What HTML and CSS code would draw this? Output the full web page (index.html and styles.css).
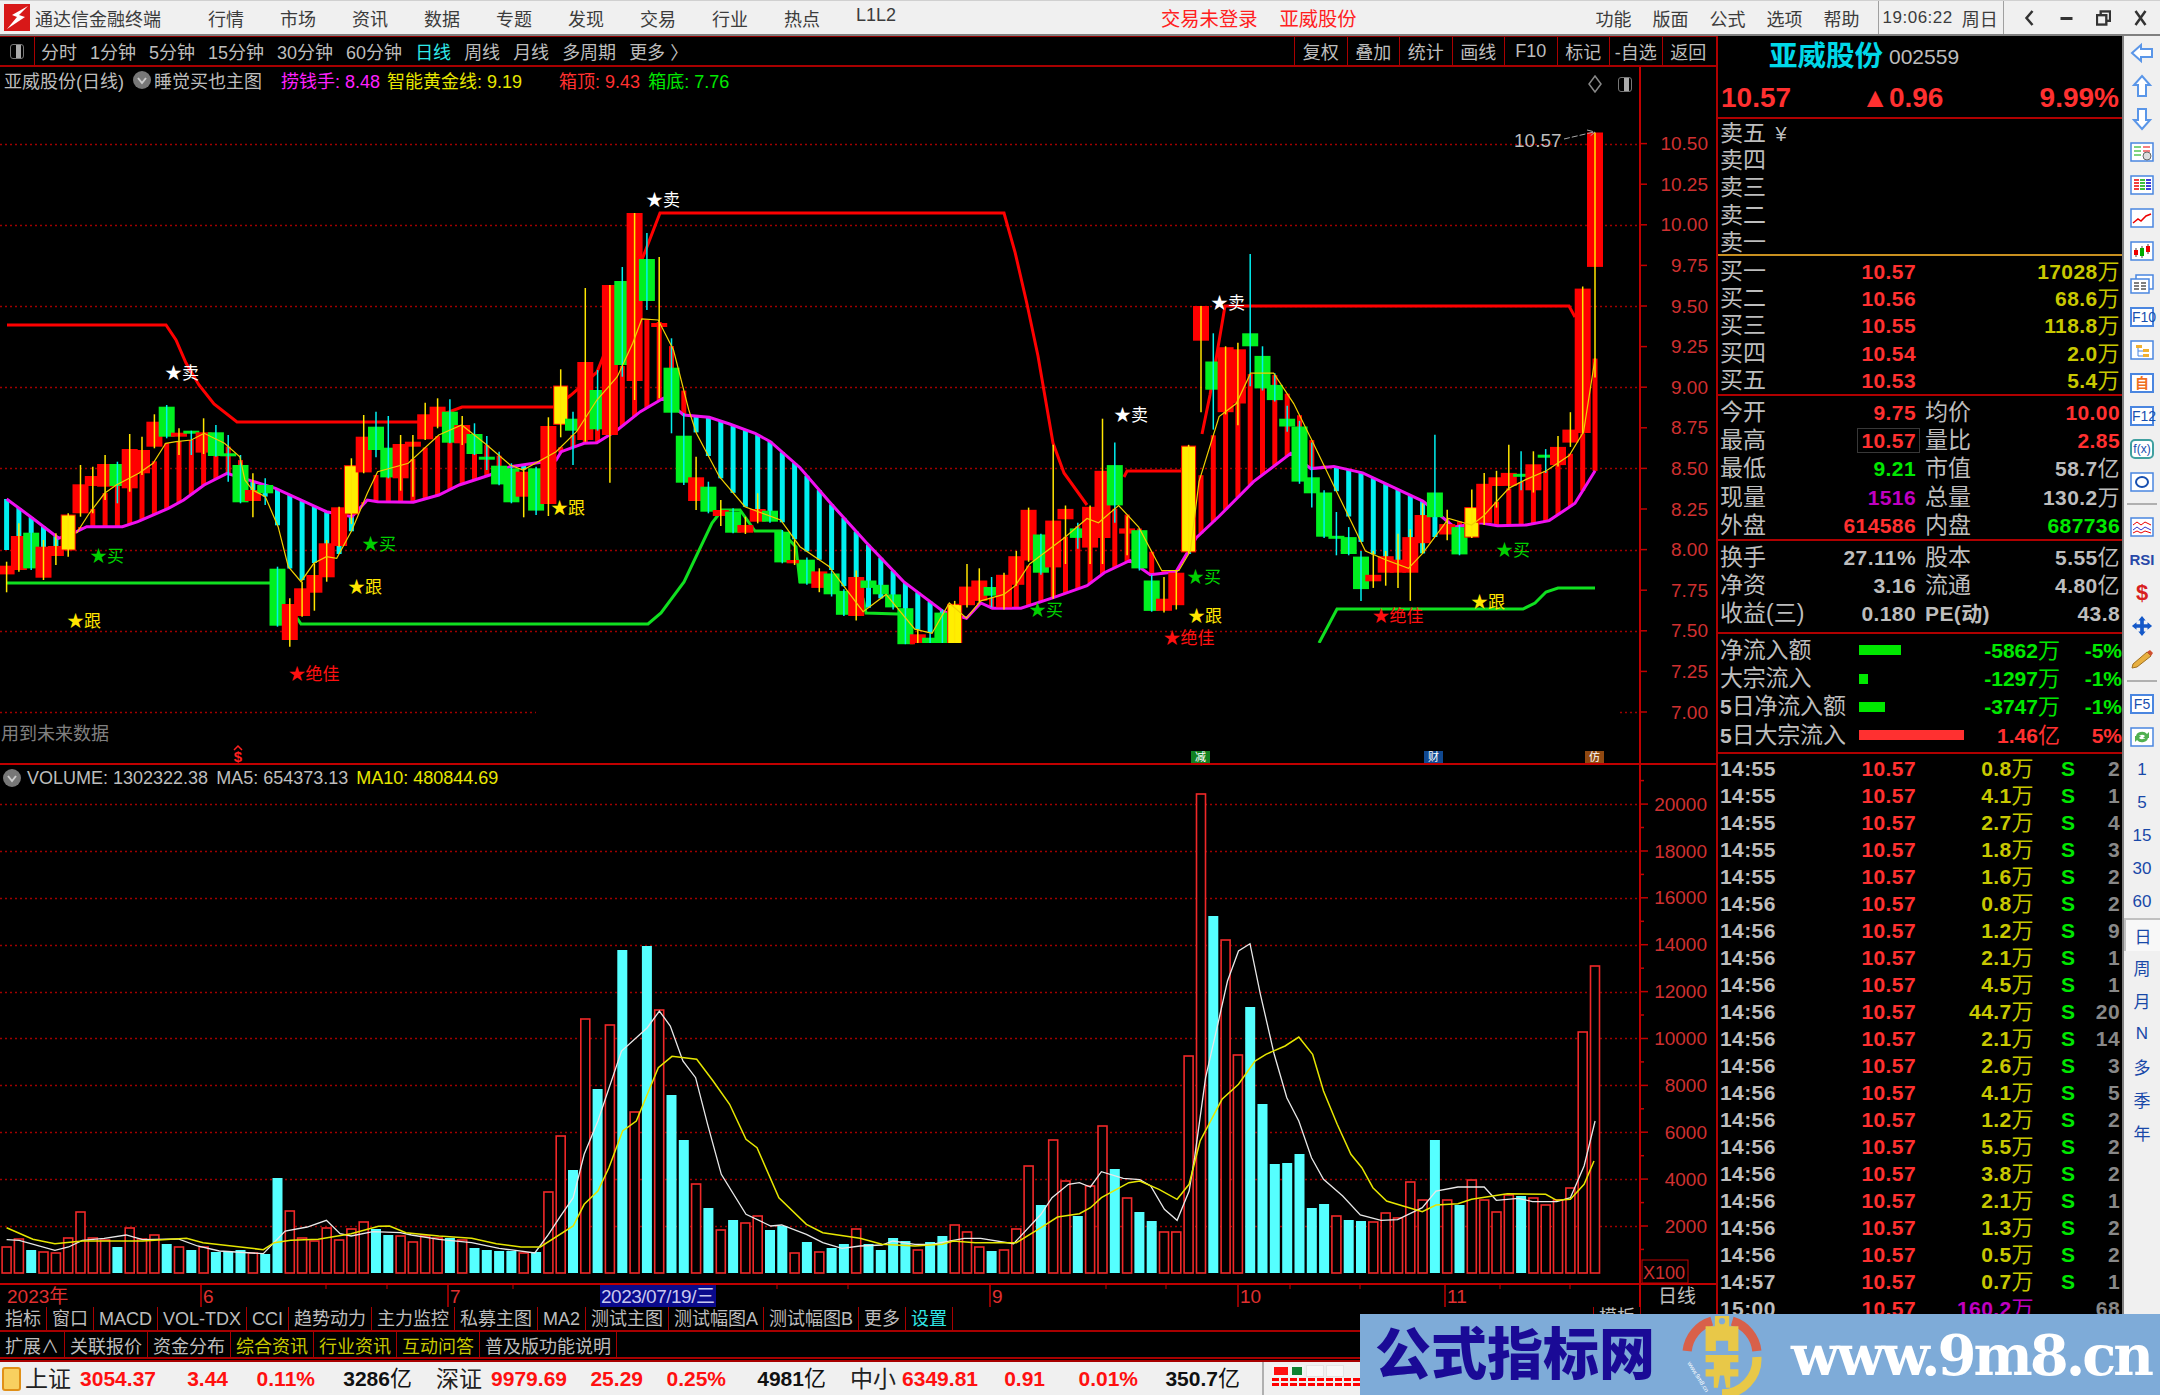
FILE: index.html
```html
<!DOCTYPE html>
<html lang="zh">
<head>
    <meta charset="UTF-8">
    <meta name="viewport" content="width=device-width, initial-scale=1.0">
    <title>通达信金融终端</title>
    <link rel="stylesheet" href="styles.css">
</head>
<body>
    <!-- Title Bar -->
    <div class="title-bar">
        <svg class="app-logo" viewBox="0 0 26 27"><rect width="26" height="27" fill="#d81818"/><path d="M24 2 L8 11 L13 13 L3 25 L21 13 L15 11 Z" fill="#fff"/></svg>
        <span class="app-name">通达信金融终端</span>
        <div class="menu">
            <span>行情</span><span>市场</span><span>资讯</span><span>数据</span><span>专题</span>
            <span>发现</span><span>交易</span><span>行业</span><span>热点</span><span>L1L2</span>
        </div>
        <div class="login-info"><span>交易未登录</span><span>亚威股份</span></div>
        <div class="menu menu-right">
            <span>功能</span><span>版面</span><span>公式</span><span>选项</span><span>帮助</span>
        </div>
        <div class="clock"><span class="clock-time">19:06:22</span><span>周日</span></div>
        <div class="win-buttons">
            <svg viewBox="0 0 14 18"><path d="M10 2 L4 9 L10 16" fill="none" stroke="#333" stroke-width="2.5"/></svg>
            <svg viewBox="0 0 14 18"><rect x="1" y="8" width="12" height="3" fill="#333"/></svg>
            <svg viewBox="0 0 16 18"><rect x="5" y="2" width="10" height="10" fill="none" stroke="#333" stroke-width="2.5"/><rect x="1" y="6" width="10" height="10" fill="#f0f0f0" stroke="#333" stroke-width="2.5"/></svg>
            <svg viewBox="0 0 14 18"><path d="M2 2 L12 16 M12 2 L2 16" stroke="#333" stroke-width="2.5"/></svg>
        </div>
    </div>

    <div class="main">
        <!-- Chart Column -->
        <div class="chart-column">
            <div class="toolbar">
                <div class="toolbar-icon"><span class="toggle-icon"></span></div>
                <div class="periods">
                    <span>分时</span><span>1分钟</span><span>5分钟</span><span>15分钟</span><span>30分钟</span><span>60分钟</span>
                    <span class="period-active">日线</span><span>周线</span><span>月线</span><span>多周期</span><span>更多 〉</span>
                </div>
                <div class="tools">
                    <span>复权</span><span>叠加</span><span>统计</span><span>画线</span><span>F10</span><span>标记</span><span>-自选</span><span>返回</span>
                </div>
            </div>

            <div class="pane pane-price">
                <svg id="price-chart" class="chart" viewBox="0 67 1716 698"></svg>
                <div class="pane-head">
                    <span>亚威股份(日线)</span>
                    <svg class="head-dot" viewBox="0 0 18 18"><circle cx="9" cy="9" r="9" fill="#777"/><path d="M5 7 L9 12 L13 7" fill="none" stroke="#ccc" stroke-width="2"/></svg>
                    <span class="head-name">睡觉买也主图</span>
                    <span class="c-magenta head-a">捞钱手: 8.48</span>
                    <span class="c-yellow head-b">智能黄金线: 9.19</span>
                    <span class="c-red head-c">箱顶: 9.43</span>
                    <span class="c-green head-d">箱底: 7.76</span>
                </div>
                <div class="pane-corner">
                    <svg class="corner-diamond" viewBox="0 0 14 18"><path d="M7 1 L13 9 L7 17 L1 9 Z" fill="none" stroke="#888" stroke-width="1.5"/></svg>
                    <span class="toggle-icon"></span>
                </div>
            </div>

            <div class="pane pane-volume">
                <svg id="volume-chart" class="chart" viewBox="0 764 1716 518"></svg>
                <div class="pane-head pane-head-volume">
                    <svg class="head-dot" viewBox="0 0 18 18"><circle cx="9" cy="9" r="9" fill="#777"/><path d="M5 7 L9 12 L13 7" fill="none" stroke="#ccc" stroke-width="2"/></svg>
                    <span>VOLUME: 1302322.38</span>
                    <span>MA5: 654373.13</span>
                    <span class="c-yellow">MA10: 480844.69</span>
                </div>
            </div>

            <svg id="date-axis" class="chart date-axis" viewBox="0 1282 1716 24"></svg>

            <div class="tabs">
                <span>指标</span><span>窗口</span><span>MACD</span><span>VOL-TDX</span><span>CCI</span><span>趋势动力</span><span>主力监控</span><span>私募主图</span><span>MA2</span><span>测试主图</span><span>测试幅图A</span><span>测试幅图B</span><span>更多</span><span class="c-cyan">设置</span>
                <span class="tab-end">模板</span>
            </div>
            <div class="tabs tabs-last">
                <span>扩展∧</span><span>关联报价</span><span>资金分布</span><span class="c-olive">综合资讯</span><span class="c-olive">行业资讯</span><span class="c-olive">互动问答</span><span>普及版功能说明</span>
            </div>
        </div>

        <!-- Quote Panel -->
        <div class="quote-panel">
            <div class="quote-head">
                <div class="stock-name"><b>亚威股份</b><span>002559</span></div>
                <div class="stock-price"><span>10.57</span><span class="stock-change">▲0.96</span><span>9.99%</span></div>
            </div>
            <div class="q-block q-sell">
                <div class="q-row"><span class="q-label">卖五 <i class="yuan">¥</i></span></div>
                <div class="q-row"><span class="q-label">卖四</span></div>
                <div class="q-row"><span class="q-label">卖三</span></div>
                <div class="q-row"><span class="q-label">卖二</span></div>
                <div class="q-row"><span class="q-label">卖一</span></div>
            </div>
            <div class="q-block q-buy">
                <div class="q-row"><div class="q-cell"><span class="q-label">买一</span><span class="c-red">10.57</span></div><div class="q-cell q-end c-olive">17028<i>万</i></div></div>
                <div class="q-row"><div class="q-cell"><span class="q-label">买二</span><span class="c-red">10.56</span></div><div class="q-cell q-end c-olive">68.6<i>万</i></div></div>
                <div class="q-row"><div class="q-cell"><span class="q-label">买三</span><span class="c-red">10.55</span></div><div class="q-cell q-end c-olive">118.8<i>万</i></div></div>
                <div class="q-row"><div class="q-cell"><span class="q-label">买四</span><span class="c-red">10.54</span></div><div class="q-cell q-end c-olive">2.0<i>万</i></div></div>
                <div class="q-row"><div class="q-cell"><span class="q-label">买五</span><span class="c-red">10.53</span></div><div class="q-cell q-end c-olive">5.4<i>万</i></div></div>
            </div>
            <div class="q-block q-stats q-stats-main">
                <div class="q-row"><div class="q-cell"><span class="q-label">今开</span><span class="c-red">9.75</span></div><div class="q-cell"><span class="q-label">均价</span><span class="c-red">10.00</span></div></div>
                <div class="q-row"><div class="q-cell"><span class="q-label">最高</span><span class="c-red q-boxed">10.57</span></div><div class="q-cell"><span class="q-label">量比</span><span class="c-red">2.85</span></div></div>
                <div class="q-row"><div class="q-cell"><span class="q-label">最低</span><span class="c-green">9.21</span></div><div class="q-cell"><span class="q-label">市值</span><span>58.7<i>亿</i></span></div></div>
                <div class="q-row"><div class="q-cell"><span class="q-label">现量</span><span class="c-purple">1516</span></div><div class="q-cell"><span class="q-label">总量</span><span>130.2<i>万</i></span></div></div>
                <div class="q-row"><div class="q-cell"><span class="q-label">外盘</span><span class="c-red">614586</span></div><div class="q-cell"><span class="q-label">内盘</span><span class="c-green">687736</span></div></div>
            </div>
            <div class="q-block q-stats q-stats-fund">
                <div class="q-row"><div class="q-cell"><span class="q-label">换手</span><span>27.11%</span></div><div class="q-cell"><span class="q-label">股本</span><span>5.55<i>亿</i></span></div></div>
                <div class="q-row"><div class="q-cell"><span class="q-label">净资</span><span>3.16</span></div><div class="q-cell"><span class="q-label">流通</span><span>4.80<i>亿</i></span></div></div>
                <div class="q-row"><div class="q-cell"><span class="q-label">收益(三)</span><span>0.180</span></div><div class="q-cell"><span class="pe-label">PE(动)</span><span>43.8</span></div></div>
            </div>
            <div class="q-block q-flow">
                <div class="flow-row c-green"><span class="q-label">净流入额</span><span class="flow-bar bg-green" style="width:42px"></span><span class="flow-val">-5862<i>万</i></span><span class="flow-pct">-5%</span></div>
                <div class="flow-row c-green"><span class="q-label">大宗流入</span><span class="flow-bar bg-green" style="width:9px"></span><span class="flow-val">-1297<i>万</i></span><span class="flow-pct">-1%</span></div>
                <div class="flow-row c-green"><span class="q-label"><b>5</b>日净流入额</span><span class="flow-bar bg-green" style="width:26px"></span><span class="flow-val">-3747<i>万</i></span><span class="flow-pct">-1%</span></div>
                <div class="flow-row c-red"><span class="q-label"><b>5</b>日大宗流入</span><span class="flow-bar bg-red" style="width:105px"></span><span class="flow-val">1.46<i>亿</i></span><span class="flow-pct">5%</span></div>
            </div>
            <div id="ticks" class="ticks"></div>
        </div>

        <!-- Side Buttons -->
        <div class="side-bar">
            <div class="side-slot"><svg class="arrow-icon" viewBox="0 0 24 20"><path d="M2 10 L11 2 V6 H22 V14 H11 V18 Z"/></svg></div>
            <div class="side-slot"><svg class="arrow-icon" viewBox="0 0 20 24"><path d="M10 2 L18 11 H14 V22 H6 V11 H2 Z"/></svg></div>
            <div class="side-slot"><svg class="arrow-icon" viewBox="0 0 20 24"><path d="M10 22 L18 13 H14 V2 H6 V13 H2 Z"/></svg></div>
            <div class="side-slot"><svg class="tool-icon" viewBox="0 0 24 20"><rect class="frame" x="1" y="1" width="22" height="18"/><path d="M4 5h7M4 9h7M4 13h7" stroke="#0a0"/><path d="M13 5h7M13 9h7" stroke="#e00"/><circle cx="17" cy="14" r="4" fill="#ddd" stroke="#666"/></svg></div>
            <div class="side-slot"><svg class="tool-icon" viewBox="0 0 24 20"><rect class="frame" x="1" y="1" width="22" height="18"/><path d="M4 5h5M4 8h5M4 11h5M4 14h5" stroke="#e00" stroke-width="1.5"/><path d="M10 5h5M10 8h5M10 11h5M10 14h5" stroke="#0a0" stroke-width="1.5"/><path d="M16 5h5M16 8h5M16 11h5M16 14h5" stroke="#00c" stroke-width="1.5"/></svg></div>
            <div class="side-slot"><svg class="tool-icon" viewBox="0 0 24 20"><rect class="frame" x="1" y="1" width="22" height="18"/><path d="M3 15 L8 11 L11 13 L16 8 L21 6" fill="none" stroke="#e00" stroke-width="1.5"/></svg></div>
            <div class="side-slot"><svg class="tool-icon" viewBox="0 0 24 20"><rect class="frame" x="1" y="1" width="22" height="18"/><path d="M6 7v9M12 5v12M18 3v10" stroke="#444"/><rect x="4" y="9" width="4" height="5" fill="#e00"/><rect x="10" y="7" width="4" height="8" fill="#0a0"/><rect x="16" y="5" width="4" height="6" fill="#e00"/></svg></div>
            <div class="side-slot"><svg class="tool-icon" viewBox="0 0 24 20"><rect x="6" y="1" width="17" height="14" fill="#fff" stroke="#4a86e0" stroke-width="1.5"/><rect class="frame" x="1" y="5" width="18" height="14"/><path d="M4 9h5M4 12h5M4 15h5M11 9h5M11 12h5M11 15h5" stroke="#555" stroke-width="1.5"/></svg></div>
            <div class="side-slot"><span class="text-icon">F10</span></div>
            <div class="side-slot"><svg class="tool-icon" viewBox="0 0 24 20"><rect class="frame" x="1" y="1" width="22" height="18"/><path d="M6 5h6v3h-6zM13 9h6v3h-6zM13 14h6v3h-6z" fill="#f0b030"/><path d="M8 8v8h5M8 11h5" fill="none" stroke="#4a86e0"/></svg></div>
            <div class="side-slot"><span class="text-icon text-icon-orange">自</span></div>
            <div class="side-slot"><span class="text-icon">F12</span></div>
            <div class="side-slot"><span class="text-icon text-icon-fx"><i>f</i>(x)</span></div>
            <div class="side-slot"><svg class="tool-icon" viewBox="0 0 24 20"><rect class="frame" x="1" y="1" width="22" height="18"/><ellipse cx="12" cy="10" rx="6" ry="5" fill="none" stroke="#1850b0" stroke-width="2"/></svg></div>
            <div class="side-sep"></div>
            <div class="side-slot"><svg class="tool-icon" viewBox="0 0 24 20"><rect class="frame" x="1" y="1" width="22" height="18"/><path d="M3 8 L7 5 L11 8 L15 5 L21 8" fill="none" stroke="#e00"/><path d="M3 13 L7 10 L11 13 L15 10 L21 13" fill="none" stroke="#33c"/><path d="M3 16 L7 14 L11 16 L15 14 L21 16" fill="none" stroke="#e00"/></svg></div>
            <div class="side-slot"><span class="rsi-icon">RSI</span></div>
            <div class="side-slot"><span class="dollar-icon">$</span></div>
            <div class="side-slot"><svg class="tool-icon" viewBox="0 0 24 24"><path d="M12 1 L16 6 H14 V10 H18 V8 L23 12 L18 16 V14 H14 V18 H16 L12 23 L8 18 H10 V14 H6 V16 L1 12 L6 8 V10 H10 V6 H8 Z" fill="#1458c8"/></svg></div>
            <div class="side-slot"><svg class="tool-icon" viewBox="0 0 24 20"><path d="M3 15 L17 3 L21 7 L7 18 L2 19 Z" fill="#e8b040" stroke="#a07020"/><path d="M17 3 L21 7 L23 4 L20 1 Z" fill="#d05030"/></svg></div>
            <div class="side-sep"></div>
            <div class="side-slot"><span class="text-icon">F5</span></div>
            <div class="side-slot"><svg class="tool-icon" viewBox="0 0 24 20"><rect class="frame" x="1" y="1" width="22" height="18"/><path d="M6 10 A6 5 0 0 1 17 7 L19 5 V11 H13 L15 9 A4 3 0 0 0 8 10 Z M18 10 A6 5 0 0 1 7 13 L5 15 V9 H11 L9 11 A4 3 0 0 0 16 10 Z" fill="#50b050"/></svg></div>
            <div class="side-slot side-text">1</div>
            <div class="side-slot side-text">5</div>
            <div class="side-slot side-text">15</div>
            <div class="side-slot side-text">30</div>
            <div class="side-slot side-text">60</div>
            <div class="side-slot side-text side-active">日</div>
            <div class="side-slot side-text">周</div>
            <div class="side-slot side-text">月</div>
            <div class="side-slot side-text">N</div>
            <div class="side-slot side-text">多</div>
            <div class="side-slot side-text">季</div>
            <div class="side-slot side-text">年</div>
        </div>
    </div>

    <!-- Status Bar -->
    <div class="status-bar">
        <span class="status-icon"></span>
        <div class="market market-a"><span class="market-name">上证</span><span>3054.37</span><span>3.44</span><span>0.11%</span><span class="market-amount">3286<i>亿</i></span></div>
        <div class="market"><span class="market-name">深证</span><span>9979.69</span><span>25.29</span><span>0.25%</span><span class="market-amount">4981<i>亿</i></span></div>
        <div class="market market-c"><span class="market-name">中小</span><span>6349.81</span><span>0.91</span><span>0.01%</span><span class="market-amount">350.7<i>亿</i></span></div>
        <div class="mini-widget">
            <div class="mini-boxes"><span class="mini-box-red"></span><span class="mini-box-green"></span><span></span><span></span></div>
            <div class="mini-dashes"></div>
        </div>
    </div>

    <!-- Banner -->
    <div class="banner">
        <span class="banner-title">公式指标网</span>
        <svg class="banner-logo" viewBox="0 0 80 80">
            <path d="M6 36 A34 34 0 0 1 30 7" fill="none" stroke="#d8604a" stroke-width="9"/>
            <path d="M50 7 A34 34 0 0 1 74 36" fill="none" stroke="#d8604a" stroke-width="9"/>
            <path d="M74 42 A34 34 0 0 1 40 78" fill="none" stroke="#e8c848" stroke-width="9"/>
            <path d="M33 2 H47 V12 H56 V36 H46 V26 H34 V36 H24 V12 H33 Z" fill="#e8c848"/>
            <path d="M24 40 H56 V47 H48 V54 H56 V61 H48 V72 H44 L42 60 H38 L36 72 H32 V61 H24 V54 H32 V47 H24 Z" fill="#e8c848"/>
            <circle cx="40" cy="7" r="3" fill="#7eabd8"/>
            <text class="logo-url" x="6" y="48" transform="rotate(58 6 48)">www.9m8.cn</text>
        </svg>
        <span class="banner-url">www.9m8.cn</span>
    </div>

    <script src="chart.js"></script>
</body>
</html>
```

FILE: styles.css
```css
* {
    box-sizing: border-box;
}
html, body {
    margin: 0;
    height: 100%;
}
body {
    position: relative;
    width: 2160px;
    height: 1395px;
    overflow: hidden;
    font-family: "Liberation Sans", "Noto Sans CJK SC", sans-serif;
    background-color: #000;
    color: #bdbdbd;
}
i {
    font-style: normal;
}
.c-red { color: #ff3030; }
.c-green { color: #00e800; }
.c-yellow { color: #e6e600; }
.c-olive { color: #c8c800; }
.c-cyan { color: #30e8e8; }
.c-magenta { color: #ff20ff; }
.c-purple { color: #c000c0; }
.bg-red { background-color: #ff3030; }
.bg-green { background-color: #00e800; }

/* Title Bar */
.title-bar {
    display: flex;
    align-items: center;
    height: 36px;
    padding-left: 4px;
    background-color: #f0f0f0;
    border-top: 1px solid #d0d0d0;
    border-bottom: 2px solid #808080;
    color: #3c3c3c;
    font-size: 18px;
}
.app-logo {
    width: 26px;
    height: 27px;
}
.app-name {
    margin-left: 5px;
}
.menu {
    display: flex;
    gap: 36px;
    margin-left: 47px;
}
.login-info {
    display: flex;
    gap: 22px;
    margin-left: 265px;
    color: #ff2020;
    font-size: 19.3px;
}
.menu-right {
    gap: 21px;
    margin-left: 239px;
}
.clock {
    display: flex;
    align-items: center;
    gap: 9px;
    height: 100%;
    margin-left: 18px;
    padding: 0 5px 0 4px;
    border-left: 1px solid #a0a0a0;
    border-right: 1px solid #a0a0a0;
}
.clock-time {
    font-size: 17px;
    letter-spacing: .5px;
}
.win-buttons {
    display: flex;
    align-items: center;
    gap: 22px;
    margin-left: 18px;
}
.win-buttons svg {
    width: 15px;
    height: 18px;
}

/* Main Area */
.main {
    display: flex;
    height: 1324px;
}
.chart-column {
    display: flex;
    flex-direction: column;
    width: 1716px;
}
.toolbar {
    display: flex;
    align-items: center;
    height: 31px;
    border-top: 1px solid #900000;
    border-bottom: 2px solid #a80000;
    font-size: 18px;
}
.toolbar-icon {
    display: flex;
    align-items: center;
    justify-content: center;
    width: 35px;
    height: 100%;
    border-right: 1px solid #a80000;
}
.toggle-icon {
    display: block;
    width: 14px;
    height: 15px;
    border: 1px solid #777;
    border-radius: 3px;
    background: linear-gradient(to right, #000 45%, #aaa 45%, #aaa 85%, #000 85%);
}
.periods {
    display: flex;
    gap: 13px;
    margin-left: 6px;
}
.period-active {
    color: #30e8e8;
}
.tools {
    display: flex;
    height: 100%;
    margin-left: auto;
    margin-right: 2px;
}
.tools span {
    display: flex;
    align-items: center;
    justify-content: center;
    width: 52.5px;
    border-left: 1px solid #a80000;
}

/* Chart Panes */
.pane {
    position: relative;
}
.pane-price {
    height: 698px;
}
.pane-volume {
    height: 518px;
}
.chart {
    display: block;
    width: 100%;
    height: 100%;
}
.date-axis {
    height: 24px;
    flex: none;
}
.pane-head {
    position: absolute;
    top: -1px;
    left: 4px;
    display: flex;
    align-items: center;
    height: 28px;
    font-size: 18px;
    white-space: nowrap;
}
.pane-head-volume {
    top: 1px;
    left: 3px;
    height: 24px;
    gap: 8px;
}
.head-dot {
    width: 18px;
    height: 18px;
    margin-left: 9px;
}
.pane-head-volume .head-dot {
    margin: 0 -2px 0 0;
}
.head-name {
    margin-left: 3px;
}
.head-a {
    margin-left: 19px;
}
.head-b {
    margin-left: 7px;
}
.head-c {
    margin-left: 37px;
}
.head-d {
    margin-left: 8px;
}
.pane-corner {
    position: absolute;
    top: 8px;
    left: 1588px;
    display: flex;
    align-items: center;
    gap: 16px;
}
.corner-diamond {
    width: 14px;
    height: 18px;
}
.chart text {
    font-family: "Liberation Sans", "Noto Sans CJK SC", sans-serif;
}
.axis-text {
    fill: #d03030;
    font-size: 19px;
    text-anchor: end;
    dominant-baseline: central;
}
.date-text {
    fill: #e03030;
    font-size: 19px;
    dominant-baseline: central;
}
.date-current {
    fill: #c8c8f0;
}
.date-unit {
    fill: #bdbdbd;
}
.sign-text {
    font-size: 17px;
    text-anchor: middle;
    dominant-baseline: central;
}
.note-text {
    fill: #808080;
    font-size: 18px;
    dominant-baseline: central;
}
.last-text {
    fill: #bdbdbd;
    font-size: 19px;
    dominant-baseline: central;
}
.flag-text {
    fill: #fff;
    font-size: 11px;
    text-anchor: middle;
    dominant-baseline: central;
}
.dollar-text {
    fill: #ff2020;
    font-size: 15px;
    font-weight: 700;
    text-anchor: middle;
    dominant-baseline: central;
}

/* Tabs */
.tabs {
    display: flex;
    height: 25px;
    border-bottom: 2px solid #a80000;
    font-size: 18px;
    line-height: 25px;
    white-space: nowrap;
}
.tabs-last {
    height: 27px;
    line-height: 30px;
}
.tabs span {
    padding: 0 5px;
    border-right: 1px solid #a80000;
}
.tabs .tab-end {
    margin-left: 640px;
    border-left: 1px solid #a80000;
    line-height: 20px;
}

/* Quote Panel */
.quote-panel {
    display: flex;
    flex-direction: column;
    width: 406px;
    border-left: 2px solid #b00000;
    font-size: 21px;
    font-weight: 700;
    line-height: 27px;
    white-space: nowrap;
}
.quote-panel i {
    font-size: 22px;
    font-weight: 400;
}
.quote-head {
    height: 83px;
    border-bottom: 2px solid #b00000;
}
.stock-name {
    display: flex;
    align-items: center;
    height: 36px;
    margin-top: 2px;
    padding-left: 51px;
    font-weight: 400;
}
.stock-name b {
    color: #00d8e8;
    font-size: 28.5px;
    font-weight: 700;
}
.stock-name span {
    margin-left: 6px;
    font-size: 21px;
}
.stock-price {
    display: flex;
    justify-content: space-between;
    margin-top: 8px;
    padding: 0 3px;
    color: #ff3030;
    font-size: 28px;
    line-height: 32px;
}
.stock-change {
    margin-right: 26px;
}
.q-block {
    padding: 1px 2px 0;
    border-bottom: 2px solid #b00000;
}
.q-sell {
    height: 137px;
    border-bottom-color: #c89020;
}
.q-buy {
    height: 140px;
    padding-top: 2px;
}
.q-stats {
    padding-top: 2px;
}
.q-stats-main {
    height: 145px;
}
.q-stats-fund {
    height: 93px;
}
.q-row {
    display: grid;
    grid-template-columns: 196px 195px;
    column-gap: 9px;
    align-items: center;
    height: 27.2px;
    letter-spacing: .4px;
}
.q-stats .q-row {
    height: 28.4px;
}
.q-cell {
    display: flex;
    justify-content: space-between;
    align-items: center;
}
.q-end {
    justify-content: flex-end;
}
.q-label {
    font-size: 23px;
    font-weight: 400;
    letter-spacing: 0;
}
.q-label b {
    font-size: 21px;
}
.pe-label {
    font-size: 21px;
}
.quote-panel .yuan {
    margin-left: 3px;
    font-size: 20px;
}
.q-boxed {
    margin: -1px -4px -1px 0;
    padding: 0 3px;
    border: 1px solid #383838;
    line-height: 23px;
}
.q-flow {
    height: 120px;
    padding-top: 2px;
}
.flow-row {
    display: grid;
    grid-template-columns: 139px 110px 91px 62px;
    align-items: center;
    height: 28.4px;
}
.flow-row .q-label {
    color: #bdbdbd;
    letter-spacing: -.2px;
}
.flow-row .q-label b {
    letter-spacing: 0;
}
.flow-bar {
    height: 10px;
}
.flow-val, .flow-pct {
    text-align: right;
}

/* Tick List */
.ticks {
    flex: 1;
    overflow: hidden;
    padding: 1px 2px 0;
}
.tick-row {
    display: grid;
    grid-template-columns: 100px 96px 118px 60px 26px;
    align-items: center;
    height: 27px;
    letter-spacing: .4px;
}
.tick-price, .tick-vol, .tick-count {
    text-align: right;
}
.tick-price { color: #ff3030; }
.tick-vol { color: #c8c800; }
.tick-vol-big { color: #c000c0; }
.tick-side {
    padding-left: 27px;
    color: #00e800;
}
.tick-count { color: #888; }

/* Side Bar */
.side-bar {
    width: 38px;
    background-color: #f0f0f0;
    border-left: 2px solid #808080;
}
.side-slot {
    display: flex;
    align-items: center;
    justify-content: center;
    height: 33px;
}
.side-sep {
    height: 12px;
    margin: 0 3px;
    background: linear-gradient(#f0f0f0 5px, #b0b0b0 5px, #b0b0b0 7px, #f0f0f0 7px);
}
.arrow-icon {
    width: 24px;
    height: 24px;
    fill: #fff;
    stroke: #5a96e8;
    stroke-width: 2;
}
.tool-icon {
    width: 24px;
    height: 22px;
}
.frame {
    fill: #fff;
    stroke: #4a86e0;
    stroke-width: 1.5;
}
.text-icon {
    display: block;
    width: 24px;
    height: 20px;
    border: 2px solid #4a86e0;
    background-color: #fff;
    color: #1850b0;
    font-size: 14px;
    line-height: 16px;
    text-align: center;
}
.text-icon-orange {
    color: #f07020;
    font-weight: 700;
}
.text-icon-fx {
    border-color: #40a0a0;
    border-radius: 5px;
    font-size: 12px;
}
.rsi-icon {
    color: #2848a8;
    font-size: 15px;
    font-weight: 700;
}
.dollar-icon {
    color: #d82020;
    font-size: 22px;
    font-weight: 700;
}
.side-text {
    color: #1848a8;
    font-size: 17px;
}
.side-active {
    border-top: 2px solid #c0c0c0;
    border-left: 2px solid #c0c0c0;
    background-color: #f8f8f8;
}

/* Status Bar */
.status-bar {
    display: flex;
    align-items: center;
    height: 35px;
    padding-left: 2px;
    background-color: #f0f0f0;
    border-top: 2px solid #a80000;
    color: #ff1010;
    font-size: 21px;
    font-weight: 700;
    line-height: 28px;
    white-space: nowrap;
}
.status-icon {
    width: 19px;
    height: 24px;
    margin-right: 4px;
    border: 2px solid #e09018;
    border-radius: 3px;
    background-color: #f8d060;
}
.market {
    display: grid;
    grid-template-columns: 50px 81px 76px 83px 100px;
    align-items: center;
    margin-right: 24px;
    text-align: right;
}
.market-a {
    grid-template-columns: 50px 81px 72px 87px 97px;
}
.market-c {
    grid-template-columns: 50px 78px 67px 93px 102px;
    margin-right: 0;
}
.market-name {
    color: #222;
    font-size: 23px;
    font-weight: 400;
    text-align: left;
}
.market-amount {
    color: #111;
}
.market-amount i {
    font-size: 22px;
    font-weight: 400;
}
.mini-widget {
    width: 98px;
    height: 100%;
    margin-left: 22px;
    padding: 3px 0 0 8px;
    border-left: 2px solid #b0b0b0;
}
.mini-boxes {
    display: flex;
    gap: 2px;
    height: 12px;
}
.mini-boxes span {
    width: 18px;
    height: 12px;
    border: 1px solid #e4e4e4;
    background-color: #f8f8f8;
}
.mini-boxes .mini-box-red {
    border: 2px solid #f4f4f4;
    background-color: #ff1010;
}
.mini-boxes .mini-box-green {
    width: 14px;
    margin-left: -2px;
    border: 2px solid #f4f4f4;
    background-color: #108030;
}
.mini-dashes {
    height: 8px;
    margin-top: 1px;
    background-image:
        linear-gradient(to bottom, transparent 3px, #f0f0f0 3px, #f0f0f0 5px, transparent 5px),
        repeating-linear-gradient(to right, #f00 0, #f00 7px, transparent 7px, transparent 9px);
}

/* Banner */
.banner {
    position: absolute;
    left: 1360px;
    top: 1314px;
    display: flex;
    align-items: center;
    width: 800px;
    height: 81px;
    background-color: #7eabd8;
}
.banner-title {
    margin-left: 15px;
    color: #1a0a96;
    font-size: 56px;
    font-weight: 900;
    line-height: 1;
}
.banner-logo {
    width: 82px;
    height: 82px;
    margin-left: 26px;
    flex: none;
}
.logo-url {
    fill: #fff;
    font-family: "Liberation Sans", sans-serif;
    font-size: 6px;
}
.banner-url {
    margin-left: 28px;
    color: #fff;
    font-family: "DejaVu Serif", serif;
    font-size: 56px;
    font-weight: 700;
    letter-spacing: -3px;
    line-height: 1;
}
```

FILE: chart.js
```js
// bar layout shared by both panes
const COUNT = 130;
const STEP = 12.313;
const barX = i => 6.6 + STEP * i;

const RED = "#ff0000";
const GREEN = "#00f020";
const YELLOW = "#ffe600";
const CYAN = "#00f0f0";
const MAGENTA = "#f010f0";
const AXIS = "#c00000";

// the two halves of the price data are stored in different scales
const leftPt = ([x, y]) => [x / 1.96, 300 + y / 3];
const rightPt = ([x, y]) => [800 + x / 1.742, 100 + y / 2.306];
const leftY = y => 300 + y / 3;
const rightY = y => 100 + y / 2.306;
const volLeft = ([x, y]) => [x / 1.823, 760 + y / 3];
const volRight = ([x, y]) => [860 + x / 1.823, 760 + y / 3];

// top, bottom, wick top, wick bottom, kind
const CANDLES_LEFT = [
    [797,823,785,877,"r"],[708,810,670,815,"r"],[698,805,690,810,"g"],[740,833,720,840,"r"],[738,768,700,795,"r"],
    [645,750,640,770,"y"],[553,640,495,650,"r"],[528,558,500,640,"r"],[492,560,465,600,"r"],[492,558,485,610,"g"],
    [447,565,402,575,"r"],[450,520,410,525,"r"],[365,440,343,445,"r"],[320,410,315,415,"g"],[398,410,385,465,"r"],
    [392,400,392,465,"g"],[397,458,355,462,"r"],[397,468,375,470,"g"],[460,467,405,545,"g"],[495,607,465,610,"g"],
    [570,603,520,652,"r"],[555,580,535,615,"g"],[806,977,800,980,"g"],[912,1020,895,1040,"r"],[865,948,845,950,"r"],
    [825,878,790,932,"r"],[730,832,720,845,"r"],[622,738,620,740,"r"],[497,642,475,672,"y"],[410,517,345,520,"r"],
    [380,450,335,472,"g"],[443,532,348,535,"g"],[432,535,405,572,"r"],[425,440,405,590,"r"],[343,418,308,420,"r"],
    [320,380,295,385,"r"],[335,428,298,430,"g"],[375,430,348,435,"r"],[402,462,370,465,"g"],[470,476,408,510,"g"],
    [497,553,455,556,"g"],[505,607,490,610,"g"],[515,590,505,652,"r"],[505,632,500,645,"g"],[378,612,352,648,"r"],
    [258,373,208,412,"y"],[356,392,335,495,"g"],[186,420,-36,425,"r"],[270,388,210,392,"g"],[-45,405,-45,548,"r"],
    [-57,195,-99,230,"g"],[-261,243,-261,300,"r"],[-123,3,-201,30,"g"],[69,81,-129,295,"r"],[203,338,115,400,"g"],
    [407,548,340,555,"g"],[532,603,470,630,"r"],[560,635,545,640,"g"],[630,648,600,678,"r"],[635,698,625,700,"g"],
    [675,698,650,702,"r"],[627,665,580,670,"r"],[632,665,625,668,"g"],[695,787,690,790,"g"],[780,790,720,795,"r"]
];
const CANDLES_RIGHT = [
    [1060,1115,1055,1118,"g"],[1087,1125,1080,1135,"r"],[1092,1140,1085,1145,"g"],[1132,1187,1128,1190,"g"],[1100,1190,1085,1200,"r"],
    [1108,1125,1105,1128,"g"],[1118,1140,1115,1145,"g"],[1140,1170,1135,1175,"g"],[1172,1255,1165,1255,"g"],[1232,1255,1220,1255,"r"],
    [1240,1255,1195,1255,"g"],[1182,1255,1175,1255,"g"],[1163,1255,1155,1255,"y"],[1122,1165,1070,1170,"r"],[1108,1155,1080,1160,"r"],
    [1123,1143,1100,1170,"g"],[1095,1170,1090,1175,"r"],[1052,1118,1040,1120,"r"],[945,1062,940,1065,"r"],[1002,1090,1000,1095,"g"],
    [970,1078,795,1150,"r"],[943,967,935,1070,"r"],[988,1010,975,1035,"g"],[938,1032,935,1070,"r"],[855,1010,735,1070,"r"],
    [842,935,790,975,"g"],[988,1000,960,1050,"r"],[992,1080,988,1085,"g"],[1108,1178,1095,1180,"g"],[1150,1178,1100,1182,"r"],
    [1090,1165,1085,1175,"r"],[798,1042,795,1045,"y"],[475,555,475,720,"r"],[603,668,538,760,"g"],[570,720,568,725,"r"],
    [575,700,560,750,"r"],[538,568,355,660,"g"],[590,665,568,670,"g"],[657,692,630,695,"g"],[735,753,705,765,"g"],
    [753,880,740,885,"g"],[870,907,790,940,"g"],[905,1007,900,1010,"g"],[1005,1010,950,1050,"g"],[1008,1047,985,1050,"g"],
    [1053,1128,1040,1155,"g"],[1095,1110,1040,1125,"r"],[1052,1090,1040,1120,"r"],[1060,1090,1000,1125,"r"],[1008,1090,990,1155,"r"],
    [957,1022,930,1045,"r"],[905,962,772,988,"g"],[978,1002,945,1015,"r"],[985,1048,980,1050,"g"],[940,1008,898,1010,"y"],
    [885,975,860,980,"r"],[870,890,855,940,"r"],[860,890,795,900,"r"],[862,868,810,900,"g"],[840,900,810,905,"r"],
    [818,822,805,860,"g"],[800,842,775,845,"r"],[760,790,720,800,"r"],[435,768,430,770,"r"],[75,385,75,640,"r"]
];

const SLOW_LINE = [
    ...[[13,597],[60,650],[115,715],[150,695],[170,680],[240,680],[270,665],[330,625],[360,600],[400,555],[445,520],[540,565],
        [640,635],[690,650],[720,600],[740,605],[810,607],[860,585],[900,555],[960,525],[1000,500],[1090,480],[1100,455],
        [1145,430],[1170,428],[1210,390],[1255,335],[1300,295],[1340,345],[1390,352],[1430,372],[1480,400],[1510,425]].map(leftPt),
    ...[[0,848],[50,925],[115,1020],[180,1110],[250,1180],[290,1195],[315,1160],[335,1172],[385,1172],[440,1148],[500,1120],
        [530,1090],[575,1062],[610,1095],[655,1088],[690,1010],[730,960],[790,880],[855,815],[890,850],[930,845],[980,860],
        [1085,925],[1140,985],[1185,975],[1215,982],[1265,980],[1305,970],[1350,930],[1385,855]].map(rightPt)
];
const FAST_LINE = [
    ...[[13,750],[37,795],[61,750],[85,760],[109,768],[130,750],[150,700],[175,640],[205,580],[228,555],[272,520],[300,490],
        [325,430],[345,425],[375,420],[400,400],[440,430],[470,470],[480,540],[495,570],[520,590],[545,680],[565,800],[590,845],
        [615,790],[640,770],[660,775],[690,690],[720,580],[740,515],[800,490],[860,405],[905,375],[950,430],[1000,495],[1025,510],
        [1090,455],[1130,395],[1170,300],[1210,230],[1240,130],[1258,57],[1290,60],[1320,150],[1350,330],[1365,400],[1410,530],
        [1460,620],[1530,660]].map(leftPt),
    ...[[0,1030],[50,1075],[110,1180],[150,1140],[200,1220],[230,1230],[260,1160],[290,1195],[315,1155],[355,1140],[375,1120],
        [400,1070],[460,1010],[500,965],[520,975],[555,935],[590,985],[630,1085],[660,1085],[680,1040],[695,880],[730,730],
        [760,700],[785,630],[825,630],[860,700],[890,780],[930,890],[985,1040],[1020,1060],[1060,1080],[1085,1045],[1130,965],
        [1170,980],[1190,960],[1235,895],[1265,875],[1300,855],[1340,820],[1365,765],[1385,595]].map(rightPt)
];

const RED_LINES = [
    [[7,325],[166,325],[176,340],[186,363],[199,385],[214,404],[237,422],[418,422],[449,412],[462,407],[556,407],[571,395],
     [597,372],[643,257],[660,213],[1004,213],[1015,252],[1027,304],[1038,356],[1053,443],[1064,473],[1087,505]],
    [[1124,477],[1127,471],[1182,471]],
    [[1202,434],[1210,395],[1225,306],[1569,306],[1575,317]]
];
const GREEN_LINES = [
    [[7,583],[270,583]],
    [[297,618],[301,624],[648,624],[661,613],[684,582],[712,523],[722,510],[740,510],[755,531],[781,531],[796,547],[800,583]],
    [[863,598],[866,613],[898,614]],
    [[1319,643],[1337,609],[1523,609],[1535,603],[1546,592],[1558,588],[1595,588]]
];

const SIGNS = [
    ["★卖","#fff",182,373],["★卖","#fff",663,200],["★卖","#fff",1228,303],["★卖","#fff",1131,415],
    ["★买","#00d000",107,556],["★买","#00d000",379,544],["★买","#00d000",1046,610],["★买","#00d000",1204,577],["★买","#00d000",1513,550],
    ["★跟","#ffe600",568,508],["★跟","#ffe600",365,587],["★跟","#ffe600",84,621],["★跟","#ffe600",1205,616],["★跟","#ffe600",1488,602],
    ["★绝佳","#ff1010",314,674],["★绝佳","#ff1010",1189,638],["★绝佳","#ff1010",1398,616]
];

// volume bar heights, "r" hollow red, "c" filled cyan
const VOLUMES = [
    [26,"r"],[34,"r"],[23,"c"],[21,"r"],[20,"r"],[35,"r"],[61,"r"],[35,"r"],[33,"r"],[26,"c"],
    [45,"r"],[34,"r"],[38,"r"],[29,"c"],[26,"r"],[23,"c"],[26,"r"],[21,"c"],[21,"c"],[23,"c"],
    [20,"r"],[19,"c"],[95,"c"],[62,"r"],[35,"r"],[32,"r"],[45,"r"],[33,"r"],[44,"r"],[51,"r"],
    [44,"c"],[38,"c"],[37,"r"],[31,"r"],[37,"r"],[35,"r"],[35,"c"],[33,"r"],[25,"c"],[23,"c"],
    [22,"c"],[22,"c"],[20,"r"],[21,"c"],[81,"r"],[137,"r"],[103,"c"],[254,"r"],[184,"c"],[248,"r"],
    [323,"c"],[161,"r"],[327,"c"],[263,"r"],[178,"c"],[133,"c"],[89,"r"],[65,"c"],[43,"r"],[53,"c"],
    [50,"r"],[57,"r"],[43,"c"],[47,"c"],[20,"r"],[31,"c"],[21,"r"],[25,"c"],[29,"c"],[44,"r"],
    [29,"c"],[23,"c"],[35,"c"],[32,"c"],[23,"r"],[31,"c"],[37,"c"],[48,"r"],[41,"r"],[26,"r"],
    [22,"c"],[23,"r"],[44,"r"],[107,"r"],[68,"c"],[133,"r"],[92,"r"],[57,"c"],[87,"r"],[147,"r"],
    [104,"c"],[75,"r"],[61,"c"],[52,"c"],[41,"r"],[41,"r"],[217,"r"],[479,"r"],[357,"c"],[333,"r"],
    [218,"r"],[266,"c"],[169,"c"],[109,"c"],[110,"c"],[119,"c"],[65,"c"],[69,"c"],[57,"r"],[53,"c"],
    [52,"c"],[51,"r"],[60,"r"],[55,"r"],[91,"r"],[73,"r"],[133,"c"],[73,"r"],[68,"c"],[93,"r"],
    [73,"r"],[61,"r"],[78,"r"],[77,"c"],[75,"r"],[68,"r"],[73,"r"],[85,"r"],[241,"r"],[307,"r"]
];
const VOL_BASE = 1272;

const MA5_LINE = [
    ...[[12,1436],[35,1438],[100,1468],[125,1458],[150,1438],[190,1432],[230,1422],[260,1436],[325,1434],[360,1455],[400,1470],
        [480,1478],[520,1410],[560,1398],[595,1378],[620,1418],[640,1425],[680,1412],[730,1415],[750,1422],[800,1435],[860,1445],
        [910,1462],[975,1476],[1000,1420],[1020,1370],[1045,1310],[1065,1180],[1090,1080],[1133,870],[1180,800],[1202,750],
        [1222,795],[1245,900],[1268,950],[1290,1090],[1315,1240],[1360,1360],[1405,1395],[1425,1392],[1470,1420],[1500,1445],
        [1535,1462]].map(volLeft),
    ...[[0,1455],[40,1452],[60,1440],[100,1450],[130,1450],[190,1432],[220,1432],[280,1448],[330,1360],[350,1310],[380,1270],
        [400,1265],[420,1278],[440,1232],[480,1252],[510,1256],[530,1275],[555,1345],[578,1378],[600,1290],[610,1190],[630,950],
        [655,770],[670,660],[690,570],[711,548],[730,700],[755,880],[778,1010],[800,1080],[823,1190],[845,1255],[880,1305],
        [912,1362],[950,1378],[980,1376],[1025,1340],[1050,1290],[1090,1278],[1138,1278],[1160,1318],[1200,1312],[1226,1322],
        [1270,1322],[1295,1310],[1320,1215],[1340,1080]].map(volRight)
];
const MA10_LINE = [
    ...[[12,1400],[60,1435],[100,1448],[150,1440],[260,1440],[340,1432],[370,1445],[480,1466],[500,1445],[530,1438],[580,1435],
        [640,1418],[690,1396],[710,1395],[740,1415],[800,1425],[860,1432],[905,1448],[950,1458],[985,1458],[1045,1395],[1065,1330],
        [1090,1290],[1110,1220],[1135,1110],[1160,1080],[1200,920],[1225,886],[1270,895],[1300,960],[1330,1030],[1360,1135],
        [1380,1160],[1420,1310],[1470,1390],[1500,1415]].map(volLeft),
    ...[[0,1432],[40,1450],[100,1455],[150,1450],[170,1440],[210,1445],[285,1445],[330,1400],[360,1368],[400,1358],[420,1340],
        [440,1310],[490,1265],[510,1260],[545,1285],[578,1315],[600,1270],[620,1140],[660,1015],[690,970],[720,900],[740,880],
        [775,855],[800,828],[825,880],[845,990],[870,1090],[895,1180],[915,1220],[935,1280],[960,1320],[990,1335],[1025,1352],
        [1050,1332],[1090,1328],[1115,1315],[1180,1298],[1250,1300],[1270,1318],[1295,1315],[1320,1270],[1338,1200]].map(volRight)
];

const TICKS = [
    ["14:55","0.8",2],["14:55","4.1",1],["14:55","2.7",4],["14:55","1.8",3],["14:55","1.6",2],
    ["14:56","0.8",2],["14:56","1.2",9],["14:56","2.1",1],["14:56","4.5",1],["14:56","44.7",20],
    ["14:56","2.1",14],["14:56","2.6",3],["14:56","4.1",5],["14:56","1.2",2],["14:56","5.5",2],
    ["14:56","3.8",2],["14:56","2.1",1],["14:56","1.3",2],["14:56","0.5",2],["14:57","0.7",1]
];

function interp(line, x) {
    if (x <= line[0][0]) return line[0][1];
    for (let k = 1; k < line.length; k++) {
        if (x <= line[k][0]) {
            const [x0, y0] = line[k - 1];
            const [x1, y1] = line[k];
            return y0 + (y1 - y0) * (x - x0) / (x1 - x0);
        }
    }
    return line[line.length - 1][1];
}

function polyline(points, color, width) {
    const pts = points.map(p => p[0].toFixed(1) + "," + p[1].toFixed(1)).join(" ");
    return `<polyline points="${pts}" fill="none" stroke="${color}" stroke-width="${width}"/>`;
}

function rect(x, y, w, h, fill, extra = "") {
    return `<rect x="${x.toFixed(1)}" y="${y.toFixed(1)}" width="${w}" height="${h.toFixed(1)}" fill="${fill}" ${extra}/>`;
}

function vline(x, y0, y1, color, width) {
    return `<line x1="${x.toFixed(1)}" y1="${y0.toFixed(1)}" x2="${x.toFixed(1)}" y2="${y1.toFixed(1)}" stroke="${color}" stroke-width="${width}"/>`;
}

function hline(x0, x1, y, color, width, dash = "") {
    const d = dash ? `stroke-dasharray="${dash}"` : "";
    return `<line x1="${x0}" y1="${y}" x2="${x1}" y2="${y}" stroke="${color}" stroke-width="${width}" ${d}/>`;
}

function drawCandle(c, x, toY) {
    const top = toY(c[0]);
    const bottom = toY(c[1]);
    const h = Math.max(bottom - top, 3);
    const body = { r: RED, g: GREEN, y: "#ffee00" }[c[4]];
    const wick = c[4] === "g" ? CYAN : YELLOW;
    const w = c[4] === "y" ? 14 : 16;
    const edge = c[4] === "y" ? `stroke="${RED}" stroke-width="1"` : "";
    return rect(x - w / 2, top, w, h, body, edge) + vline(x, toY(c[2]), toY(c[3]), wick, 1.5);
}

function drawPrice() {
    let s = "";
    const priceY = p => 712 - (p - 7) * 162.4;

    for (let p = 7; p <= 10.5; p += 0.5) {
        const y = Math.round(priceY(p)) + 0.5;
        if (p === 7) {
            s += hline(0, 536, y, "#a00000", 1.5, "2 3") + hline(1620, 1640, y, "#a00000", 1.5, "2 3");
        } else {
            s += hline(0, 1640, y, "#a00000", 1.5, "2 3");
        }
    }

    RED_LINES.forEach(l => s += polyline(l, RED, 3));
    GREEN_LINES.forEach(l => s += polyline(l, "#10e020", 3));

    for (let i = 0; i < COUNT; i++) {
        const x = barX(i);
        const fast = interp(FAST_LINE, x);
        const slow = interp(SLOW_LINE, x);
        s += vline(x, Math.min(fast, slow), Math.max(fast, slow), fast < slow ? RED : CYAN, 5);
    }
    s += polyline(SLOW_LINE, MAGENTA, 3);

    CANDLES_LEFT.forEach((c, i) => s += drawCandle(c, barX(i), leftY));
    CANDLES_RIGHT.forEach((c, i) => s += drawCandle(c, barX(i + CANDLES_LEFT.length), rightY));

    s += polyline(FAST_LINE.filter(p => p[0] > 75), "#f0d000", 1.2);

    // dark patch over the lower part of the chart
    s += rect(915, 643, 407, 80, "#000");

    SIGNS.forEach(([text, color, x, y]) => {
        s += `<text class="sign-text" x="${x}" y="${y}" fill="${color}">${text}</text>`;
    });

    s += `<text class="last-text" x="1514" y="140">10.57</text>`;
    s += `<path d="M1564 139 L1594 132 M1587 130 L1595 132 L1589 137" fill="none" stroke="#aaa" stroke-width="1" stroke-dasharray="6 2"/>`;
    s += `<text class="note-text" x="1" y="734">用到未来数据</text>`;

    s += `<text class="dollar-text" x="238" y="756">$</text>`;
    s += `<path d="M234 750 L238 746 L242 750" fill="none" stroke="#ff2020" stroke-width="1.5"/>`;
    [[1191, "#108020", "减"], [1424, "#104890", "财"], [1585, "#904810", "仿"]].forEach(([x, color, t]) => {
        s += rect(x, 751, 19, 12, color);
        s += `<text class="flag-text" x="${x + 9.5}" y="757">${t}</text>`;
    });

    // axis
    s += vline(1640, 67, 764, AXIS, 2);
    s += hline(0, 1716, 764, AXIS, 2);
    for (let k = 0; k <= 14; k++) {
        const p = 7 + k * 0.25;
        const y = priceY(p);
        s += hline(1640, 1647, y.toFixed(1), AXIS, 1.5);
        s += `<text class="axis-text" x="1708" y="${y.toFixed(1)}">${p.toFixed(2)}</text>`;
    }
    document.getElementById("price-chart").innerHTML = s;
}

function drawVolume() {
    let s = "";
    const volY = v => 1225 - (v - 2000) * 0.02344;

    for (let v = 2000; v <= 20000; v += 2000) {
        s += hline(0, 1640, Math.round(volY(v)) + 0.5, "#a00000", 1.5, "2 3");
    }

    VOLUMES.forEach(([h, kind], i) => {
        const x = barX(i);
        if (kind === "c") {
            s += rect(x - 5, VOL_BASE - h, 10, h, "#55ffff");
        } else {
            s += rect(x - 4.5, VOL_BASE - h, 9, h, "#000", `stroke="#f02828" stroke-width="1.6"`);
        }
    });

    s += polyline(MA5_LINE, "#e8e8e8", 1.3);
    s += polyline(MA10_LINE, "#e6e600", 1.5);

    s += vline(1640, 764, 1282, AXIS, 2);
    for (let v = 1000; v <= 21000; v += 1000) {
        s += hline(1640, v % 2000 ? 1644 : 1648, volY(v).toFixed(1), AXIS, 1.5);
    }
    for (let v = 2000; v <= 20000; v += 2000) {
        s += `<text class="axis-text" x="1707" y="${volY(v).toFixed(1)}">${v}</text>`;
    }
    s += `<rect x="1642" y="1259" width="46" height="23" fill="none" stroke="${AXIS}"/>`;
    s += `<text class="axis-text" x="1685" y="1272" style="font-size:18px">X100</text>`;
    document.getElementById("volume-chart").innerHTML = s;
}

function drawDates() {
    let s = hline(0, 1716, 1283, AXIS, 2);
    [["2023年", 7], ["6", 203], ["7", 450], ["9", 992], ["10", 1240], ["11", 1447]].forEach(([t, x]) => {
        s += `<text class="date-text" x="${x}" y="1295">${t}</text>`;
        if (x > 7) s += vline(x - 2, 1283, 1306, AXIS, 1.5);
    });
    [326, 387, 513, 777, 848, 1106, 1166, 1290, 1360, 1500, 1570].forEach(x => {
        s += vline(x, 1283, 1288, AXIS, 1);
    });
    s += rect(600, 1284, 116, 22, "#0a0a8c");
    s += `<text class="date-text date-current" x="601" y="1295" textLength="114">2023/07/19/三</text>`;
    s += vline(1640, 1283, 1306, AXIS, 2);
    s += `<text class="date-text date-unit" x="1658" y="1295">日线</text>`;
    document.getElementById("date-axis").innerHTML = s;
}

function drawTicks() {
    const rows = TICKS.map(([time, vol, n]) => `
        <div class="tick-row">
            <span>${time}</span><span class="tick-price">10.57</span>
            <span class="tick-vol">${vol}<i>万</i></span><span class="tick-side">S</span><span class="tick-count">${n}</span>
        </div>`);
    rows.push(`
        <div class="tick-row">
            <span>15:00</span><span class="tick-price">10.57</span>
            <span class="tick-vol tick-vol-big">160.2<i>万</i></span><span class="tick-side"></span><span class="tick-count">68</span>
        </div>`);
    document.getElementById("ticks").innerHTML = rows.join("");
}

drawPrice();
drawVolume();
drawDates();
drawTicks();
```
